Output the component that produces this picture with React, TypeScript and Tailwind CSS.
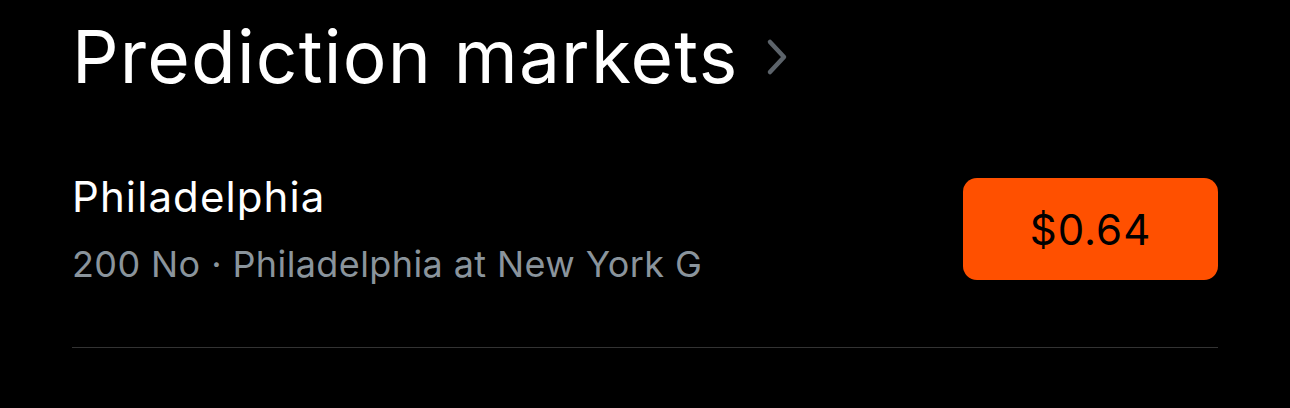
export default function App() {
  return (
    <main className="w-[1290px] h-[408px] bg-black text-white px-[72px] pt-[13px]" style={{ fontFamily: "Inter, 'Noto Sans', sans-serif" }}>
      <header className="flex items-center gap-[28px]">
        <h1 className="text-[73px] leading-[88px] font-normal tracking-[1.2px]">Prediction markets</h1>
        <svg width="22" height="38" viewBox="0 0 22 38" fill="none">
          <path d="M4 4 L18 19 L4 34" stroke="#5c636a" strokeWidth="4.5" strokeLinecap="round" strokeLinejoin="round" />
        </svg>
      </header>

      <section className="mt-[71px] flex items-center justify-between pb-[61px] border-b border-[#333333]">
        <div className="flex flex-col">
          <span className="text-[42px] leading-[50px] tracking-[1.1px]">Philadelphia</span>
          <span className="text-[36px] leading-[44px] tracking-[0.4px] text-[#8a949c] mt-[20px]">200 No · Philadelphia at New York G</span>
        </div>
        <button className="w-[255px] h-[102px] rounded-[14px] bg-[#ff5000] text-black text-[42px] tracking-[1px]">$0.64</button>
      </section>
    </main>
  )
}
